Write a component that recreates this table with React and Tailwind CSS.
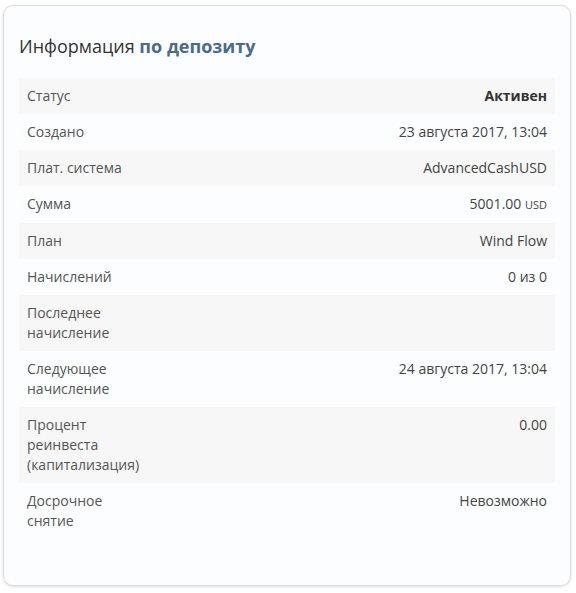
import React from "react";

const rows = [
  { label: "Статус", value: <span className="font-bold text-[#333]">Активен</span> },
  { label: "Создано", value: "23 августа 2017, 13:04" },
  { label: "Плат. система", value: "AdvancedCashUSD" },
  {
    label: "Сумма",
    value: (
      <span>
        5001.00 <span className="text-[11px]">USD</span>
      </span>
    ),
  },
  { label: "План", value: "Wind Flow" },
  { label: "Начислений", value: "0 из 0" },
  { label: "Последнее начисление", value: "" },
  { label: "Следующее начисление", value: "24 августа 2017, 13:04" },
  { label: "Процент реинвеста (капитализация)", value: "0.00" },
  { label: "Досрочное снятие", value: "Невозможно" },
];

export default function App() {
  return (
    <div className="min-h-[593px] w-[576px] bg-white pt-[5px] pl-[3px]" style={{ fontFamily: '"Open Sans", sans-serif' }}>
      <div className="w-[568px] h-[581px] rounded-[10px] border border-[#d9dde2] bg-[#fcfdfe] shadow-[0_1px_3px_rgba(0,0,0,0.12)] px-[15px] pt-[27px]">
        <h2 className="text-[18px] leading-[26px] text-[#333] mb-[19px]">
          Информация <span className="font-bold text-[#4b6b8a]">по депозиту</span>
        </h2>
        <table className="w-full border-collapse text-[14px] leading-[20px]">
          <tbody>
            {rows.map((row, i) => (
              <tr key={row.label} className={i % 2 === 0 ? "bg-[#f7f7f7]" : ""}>
                <td className="w-[125px] px-[8px] py-[8px] align-top text-[#555]">{row.label}</td>
                <td className="px-[8px] py-[8px] align-top text-right text-[#444]">{row.value}</td>
              </tr>
            ))}
          </tbody>
        </table>
      </div>
    </div>
  );
}
